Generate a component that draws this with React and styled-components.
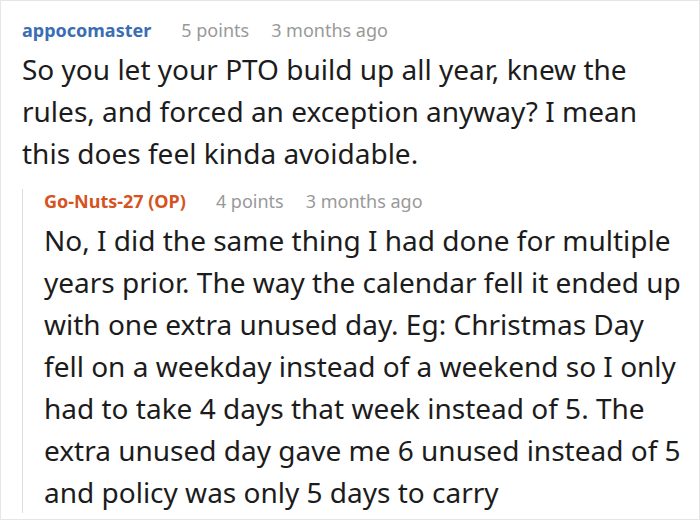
import React from "react";
import styled, { createGlobalStyle } from "styled-components";

const GlobalStyle = createGlobalStyle`
  html, body {
    margin: 0;
    padding: 0;
    background: #fff;
  }
  body {
    font-family: "Noto Sans", "Open Sans", sans-serif;
  }
`;

const Frame = styled.div`
  box-sizing: border-box;
  width: 700px;
  height: 520px;
  border: 1px solid #e6e6e6;
  padding: 17px 14px 0 21px;
  overflow: hidden;
`;

const Meta = styled.div`
  display: flex;
  align-items: center;
  height: 24px;
  font-size: 18px;
  line-height: 24px;
  color: #999;
`;

const Author = styled.span`
  font-weight: 700;
  color: ${(p) => (p.$op ? "#d5531f" : "#3b6db5")};
  margin-right: 30px;
`;

const Points = styled.span`
  margin-right: 22px;
`;

const Body = styled.p`
  margin: 6px 0 0;
  font-size: 28px;
  line-height: 42px;
  color: #1c1c1c;
`;

const Reply = styled.div`
  margin-top: 15px;
  border-left: 1px solid #dcdcdc;
  padding-left: 21px;

  ${Body} {
    margin-bottom: -12px;
  }
`;

const Comment = ({ author, op, points, time, children }) => (
  <>
    <Meta>
      <Author $op={op}>{author}</Author>
      <Points>{points}</Points>
      <span>{time}</span>
    </Meta>
    <Body>{children}</Body>
  </>
);

export default function App() {
  return (
    <>
      <GlobalStyle />
      <Frame>
        <Comment author="appocomaster" points="5 points" time="3 months ago">
          So you let your PTO build up all year, knew the rules, and forced an
          exception anyway? I mean this does feel kinda avoidable.
        </Comment>
        <Reply>
          <Comment
            author="Go-Nuts-27 (OP)"
            op
            points="4 points"
            time="3 months ago"
          >
            No, I did the same thing I had done for multiple years prior. The
            way the calendar fell it ended up with one extra unused day. Eg:
            Christmas Day fell on a weekday instead of a weekend so I only had
            to take 4 days that week instead of 5. The extra unused day gave me
            6 unused instead of 5 and policy was only 5 days to carry
          </Comment>
        </Reply>
      </Frame>
    </>
  );
}
